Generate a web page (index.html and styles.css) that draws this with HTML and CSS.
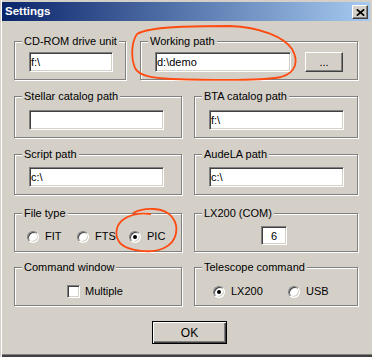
FILE: index.html
```html
<!DOCTYPE html>
<html>
<head>
<meta charset="utf-8">
<title>Settings</title>
<link rel="stylesheet" href="styles.css">
</head>
<body>
<div class="window">
  <div class="titlebar">
    <span class="title">Settings</span>
    <button class="close" type="button" aria-label="Close">
      <svg width="9" height="7" viewBox="0 0 9 7"><path d="M0.8 0.3 L8.2 6.7 M8.2 0.3 L0.8 6.7" stroke="#000" stroke-width="1.7" fill="none"/></svg>
    </button>
  </div>
  <div class="body">
    <div class="row row1">
      <fieldset class="group w-cd">
        <legend>CD-ROM drive unit</legend>
        <div class="content c1"><input class="field f-cd" value="f:\"></div>
      </fieldset>
      <fieldset class="group w-work">
        <legend>Working path</legend>
        <div class="content c1"><input class="field f-work" value="d:\demo"><button class="btn dots" type="button">...</button></div>
      </fieldset>
    </div>
    <div class="row row2">
      <fieldset class="group w-l">
        <legend>Stellar catalog path</legend>
        <div class="content c2"><input class="field f-path" value=""></div>
      </fieldset>
      <fieldset class="group w-r">
        <legend>BTA catalog path</legend>
        <div class="content c2"><input class="field f-path" value="f:\"></div>
      </fieldset>
    </div>
    <div class="row row3">
      <fieldset class="group w-l">
        <legend>Script path</legend>
        <div class="content c3"><input class="field f-path" value="c:\"></div>
      </fieldset>
      <fieldset class="group w-r">
        <legend>AudeLA path</legend>
        <div class="content c3"><input class="field f-path" value="c:\"></div>
      </fieldset>
    </div>
    <div class="row row4">
      <fieldset class="group w-l">
        <legend>File type</legend>
        <div class="content c4">
          <label class="opt o-fit"><span class="radio"></span>FIT</label>
          <label class="opt o-fts"><span class="radio"></span>FTS</label>
          <label class="opt"><span class="radio checked"></span>PIC</label>
        </div>
      </fieldset>
      <fieldset class="group w-r">
        <legend>LX200 (COM)</legend>
        <div class="content c4b"><input class="field f-com" value="6"></div>
      </fieldset>
    </div>
    <div class="row row5">
      <fieldset class="group w-l">
        <legend>Command window</legend>
        <div class="content c5"><label class="opt"><span class="check"></span>Multiple</label></div>
      </fieldset>
      <fieldset class="group w-r">
        <legend>Telescope command</legend>
        <div class="content c5b">
          <label class="opt o-lx"><span class="radio checked"></span>LX200</label>
          <label class="opt"><span class="radio"></span>USB</label>
        </div>
      </fieldset>
    </div>
    <div class="actions"><button class="btn ok" type="button">OK</button></div>
  </div>
  <svg class="annot" width="372" height="357" viewBox="0 0 372 357">
    <path d="M137,34 C150,26 200,26 230,26 C260,27 284,37 292,49 C299,61 296,73 281,77 C262,81 205,80 172,79 C152,78 139,76 135,68 C131,58 131,43 137,34" fill="none" stroke="#FF4A10" stroke-width="1.8"/>
    <path d="M133,213 C145,207 164,207 172,217 C180,227 177,242 164,248 C151,254 129,251 121,244 C114,237 115,225 124,219 C131,214 142,213 151,214" fill="none" stroke="#FF4A10" stroke-width="1.8"/>
  </svg>
</div>
</body>
</html>
```
FILE: styles.css
```css
* { box-sizing: border-box; }
html, body { margin: 0; padding: 0; background: #D4D0C8; }
body {
  font-family: "Liberation Sans", Arial, sans-serif;
  font-size: 11px;
  color: #000;
}
.window {
  position: relative;
  width: 372px;
  height: 357px;
  padding: 2px 2px 0 2px;
  background: #D4D0C8;
  box-shadow: inset 1px 0 #D4D0C8, inset 2px 0 #FFFFFF,
              inset 0 -2px #404040, inset 0 -3px #808080;
}
.titlebar {
  height: 19px;
  display: flex;
  justify-content: space-between;
  align-items: flex-start;
  padding-left: 3px;
  background: linear-gradient(to right, #0A246A, #A6CAF0);
}
.title {
  color: #fff;
  font-weight: bold;
  font-size: 11.5px;
  line-height: 19px;
}
.close {
  width: 16px;
  height: 14px;
  margin: 3px 2px 0 0;
  padding: 0;
  display: flex;
  align-items: center;
  justify-content: center;
  background: #D4D0C8;
  border: 1px solid;
  border-color: #FFFFFF #404040 #404040 #FFFFFF;
  box-shadow: inset -1px -1px #808080;
}
.close svg { display: block; }
.body { padding: 14px 0 0 12px; }
.row { display: flex; gap: 12px; }
.row1 { gap: 14px; }
.row2 { margin-top: 10px; }
.row3 { margin-top: 10px; }
.row4 { margin-top: 12px; }
.row5 { margin-top: 9px; }
.group {
  margin: 0;
  padding: 0;
  min-width: 0;
  border: 1px solid #808080;
  box-shadow: inset 1px 1px #FFFFFF, 1px 1px #FFFFFF;
}
.group legend {
  margin-left: 7px;
  padding: 0 2px;
  line-height: 13px;
  font-size: 11px;
  background: #D4D0C8;
}
.w-cd { width: 112px; }
.w-work { width: 218px; }
.w-l { width: 168px; }
.w-r { width: 164px; }
.content { display: flex; align-items: center; padding-left: 14px; }
.c1 { padding-top: 4px; padding-bottom: 7px; }
.c2 { padding-top: 7px; padding-bottom: 7px; }
.c3 { padding-top: 6px; padding-bottom: 7px; }
.c4 { padding: 10px 0 8px 12px; }
.c4b { padding: 6px 0 6px 66px; }
.c5 { padding: 11px 0 7px 52px; }
.c5b { padding: 11px 0 7px 18px; }
.field {
  height: 20px;
  margin: 0;
  padding: 0 1px;
  font: 11px "Liberation Sans", Arial, sans-serif;
  color: #000;
  background: #fff;
  border: 1px solid;
  border-color: #808080 #FFFFFF #FFFFFF #808080;
  box-shadow: inset 1px 1px #404040, inset -1px -1px #D4D0C8;
  outline: none;
}
.f-cd { width: 84px; }
.f-work { width: 136px; }
.f-path { width: 135px; }
.f-com { width: 26px; height: 19px; text-align: center; }
.btn {
  padding: 0;
  font: 11px "Liberation Sans", Arial, sans-serif;
  color: #000;
  background: #D4D0C8;
}
.dots {
  width: 38px;
  height: 20px;
  margin-left: 14px;
  border: 1px solid;
  border-color: #FFFFFF #404040 #404040 #FFFFFF;
  box-shadow: inset -1px -1px #808080;
  line-height: 14px;
}
.opt {
  display: flex;
  align-items: center;
  height: 13px;
  line-height: 13px;
}
.o-fit { width: 50px; }
.o-fts { width: 52px; }
.o-lx { width: 75px; }
.radio {
  position: relative;
  width: 12px;
  height: 12px;
  margin-right: 6px;
  border-radius: 50%;
  background: #fff;
  border: 1px solid;
  border-color: #808080 #FFFFFF #FFFFFF #808080;
  box-shadow: inset 1px 1px #404040, inset -1px -1px #D4D0C8;
  flex: none;
}
.radio.checked::after {
  content: "";
  position: absolute;
  left: 3px;
  top: 3px;
  width: 4px;
  height: 4px;
  border-radius: 50%;
  background: #000;
}
.check {
  width: 13px;
  height: 13px;
  margin-right: 5px;
  background: #fff;
  border: 1px solid;
  border-color: #808080 #FFFFFF #FFFFFF #808080;
  box-shadow: inset 1px 1px #404040, inset -1px -1px #D4D0C8;
  flex: none;
}
.actions { display: flex; padding: 15px 0 0 138px; }
.ok {
  width: 75px;
  height: 23px;
  border: 1px solid #000;
  box-shadow: inset 1px 1px #FFFFFF, inset -1px -1px #404040, inset -2px -2px #808080;
  font-size: 12px;
}
.annot {
  position: absolute;
  left: 0;
  top: 0;
  pointer-events: none;
}
```
